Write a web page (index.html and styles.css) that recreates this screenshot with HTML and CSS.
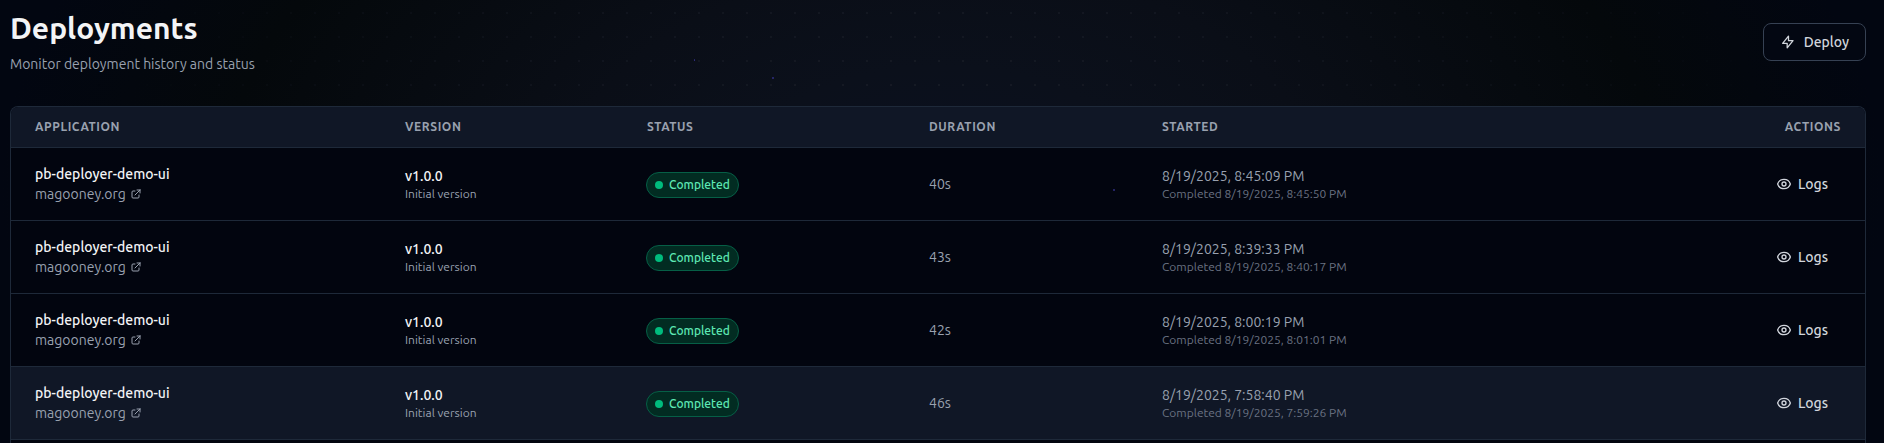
FILE: index.html
```html
<!DOCTYPE html>
<html lang="en">
<head>
<meta charset="utf-8">
<title>Deployments</title>
<link rel="stylesheet" href="styles.css">
</head>
<body>
<svg class="sprite" aria-hidden="true">
  <symbol id="external" viewBox="0 0 24 24"><path d="M10 6H6a2 2 0 00-2 2v10a2 2 0 002 2h10a2 2 0 002-2v-4M14 4h6m0 0v6m0-6L10 14"/></symbol>
  <symbol id="eye" viewBox="0 0 24 24"><path d="M15 12a3 3 0 11-6 0 3 3 0 016 0z"/><path d="M2.458 12C3.732 7.943 7.523 5 12 5c4.478 0 8.268 2.943 9.542 7-1.274 4.057-5.064 7-9.542 7-4.477 0-8.268-2.943-9.542-7z"/></symbol>
  <symbol id="bolt" viewBox="0 0 24 24"><path d="M13 10V3L4 14h7v7l9-11h-7z"/></symbol>
</svg>
<div class="dots"></div>
<i class="star star-a"></i><i class="star star-b"></i><i class="star star-c"></i>
<main class="page">
  <header class="page-header">
    <div>
      <h1 class="title">Deployments</h1>
      <p class="subtitle">Monitor deployment history and status</p>
    </div>
    <button class="deploy"><svg class="icon"><use href="#bolt"/></svg><span>Deploy</span></button>
  </header>
  <section class="card">
    <table class="table">
      <colgroup><col class="c-app"><col class="c-version"><col class="c-status"><col class="c-duration"><col class="c-started"><col></colgroup>
      <thead>
        <tr><th>Application</th><th>Version</th><th>Status</th><th>Duration</th><th>Started</th><th class="right">Actions</th></tr>
      </thead>
      <tbody>
        <tr>
          <td><div class="name">pb-deployer-demo-ui</div><a class="domain">magooney.org<svg class="ext"><use href="#external"/></svg></a></td>
          <td><div class="ver">v1.0.0</div><div class="note">Initial version</div></td>
          <td><div class="badge"><i class="dot"></i><span>Completed</span></div></td>
          <td><span class="duration">40s</span></td>
          <td><div class="started">8/19/2025, 8:45:09 PM</div><div class="done">Completed 8/19/2025, 8:45:50 PM</div></td>
          <td><button class="logs"><svg class="icon"><use href="#eye"/></svg><span>Logs</span></button></td>
        </tr>
        <tr>
          <td><div class="name">pb-deployer-demo-ui</div><a class="domain">magooney.org<svg class="ext"><use href="#external"/></svg></a></td>
          <td><div class="ver">v1.0.0</div><div class="note">Initial version</div></td>
          <td><div class="badge"><i class="dot"></i><span>Completed</span></div></td>
          <td><span class="duration">43s</span></td>
          <td><div class="started">8/19/2025, 8:39:33 PM</div><div class="done">Completed 8/19/2025, 8:40:17 PM</div></td>
          <td><button class="logs"><svg class="icon"><use href="#eye"/></svg><span>Logs</span></button></td>
        </tr>
        <tr>
          <td><div class="name">pb-deployer-demo-ui</div><a class="domain">magooney.org<svg class="ext"><use href="#external"/></svg></a></td>
          <td><div class="ver">v1.0.0</div><div class="note">Initial version</div></td>
          <td><div class="badge"><i class="dot"></i><span>Completed</span></div></td>
          <td><span class="duration">42s</span></td>
          <td><div class="started">8/19/2025, 8:00:19 PM</div><div class="done">Completed 8/19/2025, 8:01:01 PM</div></td>
          <td><button class="logs"><svg class="icon"><use href="#eye"/></svg><span>Logs</span></button></td>
        </tr>
        <tr class="active">
          <td><div class="name">pb-deployer-demo-ui</div><a class="domain">magooney.org<svg class="ext"><use href="#external"/></svg></a></td>
          <td><div class="ver">v1.0.0</div><div class="note">Initial version</div></td>
          <td><div class="badge"><i class="dot"></i><span>Completed</span></div></td>
          <td><span class="duration">46s</span></td>
          <td><div class="started">8/19/2025, 7:58:40 PM</div><div class="done">Completed 8/19/2025, 7:59:26 PM</div></td>
          <td><button class="logs"><svg class="icon"><use href="#eye"/></svg><span>Logs</span></button></td>
        </tr>
      </tbody>
    </table>
  </section>
</main>
</body>
</html>
```
FILE: styles.css
```css
* { box-sizing: border-box; }

html { height: 443px; overflow: hidden; }

body {
  margin: 0;
  height: 443px;
  overflow: hidden;
  background:
    radial-gradient(ellipse 942px 560px at 942px 190px, #0a1020 0%, #0b101b 22%, #0a0e17 40%, #04080b 76%, #020611 100%);
  color: #f3f4f6;
  font-family: Ubuntu, "Noto Sans", sans-serif;
  font-size: 14px;
  line-height: 20px;
}

.sprite { position: absolute; width: 0; height: 0; }

.dots {
  position: absolute;
  inset: 0;
  background: radial-gradient(circle at 3px 13px, #171b25 0, #171b25 0.9px, transparent 1.2px) 0 0 / 24px 24px;
  -webkit-mask-image: radial-gradient(ellipse 900px 500px at 942px 120px, #000 0%, transparent 95%);
  mask-image: radial-gradient(ellipse 900px 500px at 942px 120px, #000 0%, transparent 95%);
}

.star { position: absolute; z-index: 2; width: 2px; height: 2px; border-radius: 1px; background: #312e81; }
.star-a { left: 694px; top: 59px; width: 1px; }
.star-b { left: 772px; top: 77px; }
.star-c { left: 1113px; top: 189px; }

.page { position: relative; height: 443px; overflow: hidden; padding: 10px 18px 0 10px; }

.page-header {
  display: flex;
  justify-content: space-between;
  align-items: center;
  height: 64px;
  margin-bottom: 32px;
}

.title { margin: 0; font-size: 30px; line-height: 36px; font-weight: 600; }
.subtitle { margin: 8px 0 0; color: #99a1af; }

.icon { width: 16px; height: 16px; fill: none; stroke: currentColor; stroke-width: 2; stroke-linecap: round; stroke-linejoin: round; }
.ext { width: 12px; height: 12px; margin-left: 4px; fill: none; stroke: currentColor; stroke-width: 2; stroke-linecap: round; stroke-linejoin: round; }

button { font: inherit; font-weight: 500; background: none; color: #d1d5dc; border: 0; }

.deploy {
  display: flex;
  align-items: center;
  gap: 8px;
  width: 103px;
  height: 38px;
  padding: 0 16px;
  border: 1px solid #364153;
  border-radius: 8px;
  background: #030712;
  white-space: nowrap;
}

.card { height: 337px; border: 1px solid #1e2939; border-bottom: 0; border-radius: 8px 8px 0 0; overflow: hidden; background: #02050f; }

.table { width: 100%; border-collapse: separate; border-spacing: 0; table-layout: fixed; }
.c-app { width: 370px; }
.c-version { width: 242px; }
.c-status { width: 282px; }
.c-duration { width: 233px; }
.c-started { width: 400px; }

th {
  height: 41px;
  padding: 0 24px;
  border-bottom: 1px solid #1e2939;
  background: #101726;
  color: #99a1af;
  font-size: 12px;
  line-height: 16px;
  font-weight: 600;
  letter-spacing: 0.6px;
  text-align: left;
  text-transform: uppercase;
}

td { height: 73px; padding: 0 24px; border-bottom: 1px solid #1e2939; vertical-align: middle; }
.active td { background: #101726; }
.right { text-align: right; }

.name, .ver { font-weight: 500; }
.domain { display: flex; align-items: center; color: #99a1af; }
.note { font-size: 12px; line-height: 16px; color: #99a1af; }
.duration, .started { color: #99a1af; }
.done { font-size: 12px; line-height: 16px; color: #6a7282; }

.badge {
  display: flex;
  align-items: center;
  gap: 6px;
  width: 93px;
  height: 26px;
  margin: 2px 0 0 -1px;
  padding: 0 8px;
  border: 1px solid #065f46;
  border-radius: 13px;
  background: #022c22;
  color: #5ee9b5;
  font-size: 12px;
  font-weight: 500;
}
.dot { flex: none; width: 8px; height: 8px; border-radius: 50%; background: #00bc7d; }

.logs { display: flex; align-items: center; gap: 6px; margin-left: auto; padding: 0 13px; }
```
